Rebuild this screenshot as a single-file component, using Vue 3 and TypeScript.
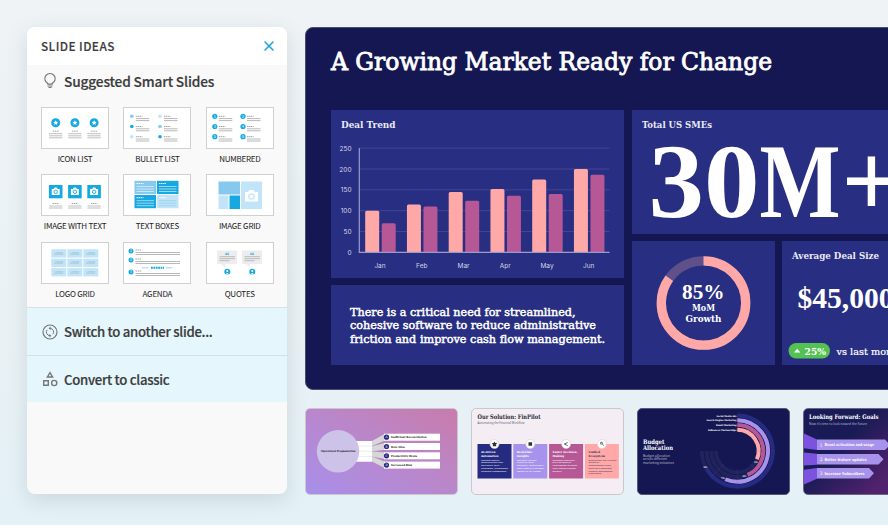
<script setup lang="ts">
interface Bar {
  month: string
  a: number
  b: number
}

const ideas = [
  'ICON LIST', 'BULLET LIST', 'NUMBERED',
  'IMAGE WITH TEXT', 'TEXT BOXES', 'IMAGE GRID',
  'LOGO GRID', 'AGENDA', 'QUOTES',
]

const bars: Bar[] = [
  { month: 'Jan', a: 100, b: 70 },
  { month: 'Feb', a: 115, b: 110 },
  { month: 'Mar', a: 145, b: 124 },
  { month: 'Apr', a: 152, b: 136 },
  { month: 'May', a: 175, b: 140 },
  { month: 'Jun', a: 200, b: 186 },
]
const ticks = [0, 50, 100, 150, 200, 250]

// chart value -> y inside the chart svg
const yOf = (v: number) => 142.3 - v * 0.4165

// bar with rounded top corners
const barPath = (x: number, v: number) => {
  const y = yOf(v)
  return `M${x} 142.3V${y + 1.5}q0-1.5 1.5-1.5h11q1.5 0 1.5 1.5V142.3z`
}

const bulletColors = ['#87c9ee', '#c1e4f8', '#16a9e1', '#87c9ee', '#c1e4f8', '#16a9e1']

const causes = [
  { mark: 'A', text: 'Inefficient Reconciliation', w: 35.5 },
  { mark: 'B', text: 'Data Silos', w: 14 },
  { mark: 'C', text: 'Productivity Drain', w: 26 },
  { mark: 'D', text: 'Increased Risk', w: 21 },
]

const pillars = [
  { fill: '#252b80', ink: '#fff', head: ['AI-Driven', 'Automation'], hw: [14.5, 17.5], body: ['Replaces manual', 'reconciliation and', 'data entry with', 'intelligent, automated', 'financial processing.'] },
  { fill: '#a893ec', ink: '#fff', head: ['Real-Time', 'Insights'], hw: [15.5, 12], body: ['Delivers unified', 'financial data', 'instantly, providing a', 'clear view of business', 'health at all times.'] },
  { fill: '#b65796', ink: '#fff', head: ['Faster Decision-', 'Making'], hw: [25, 11.5], body: ['Empowers operators', 'with actionable', 'intelligence to make', 'data-backed choices', 'quickly.'] },
  { fill: '#ffa8a8', ink: '#3b3156', head: ['Unified', 'Ecosystem'], hw: [11.5, 16.5], body: ['Eliminates the friction', 'caused by', 'disconnected tools,', 'creating a seamless', 'financial management', 'experience.'] },
]

// arc drawn clockwise from 12 o'clock
const arc = (r: number, deg: number) => {
  const t = (deg * Math.PI) / 180
  const x = 100.3 + r * Math.sin(t)
  const y = 43 - r * Math.cos(t)
  return `M100.3 ${43 - r}A${r} ${r} 0 ${deg > 180 ? 1 : 0} 1 ${x} ${y}`
}

const rings = [
  { r: 35.5, deg: 241, color: '#252b80', label: 'Social Media Ads', w: 20, pct: '90%', px: 66.5, py: 59.5 },
  { r: 30.7, deg: 203, color: '#a893ec', label: 'Search Engine Marketing', w: 30, pct: '75%', px: 84, py: 70.5 },
  { r: 26, deg: 157, color: '#b65796', label: 'Email Marketing', w: 20.5, pct: '60%', px: 105.5, py: 69 },
  { r: 21.3, deg: 113, color: '#ffa8a8', label: 'Influencer Partnerships', w: 28.5, pct: '40%', px: 117, py: 54.5 },
]

const goals = [
  { text: 'Boost activation and usage', w: 49.5, end: 82, y: 31.5 },
  { text: 'Better feature updates', w: 42, end: 75.5, y: 46 },
  { text: 'Increase Subscribers', w: 40, end: 66, y: 60 },
]
</script>

<template>
  <div class="page">
    <aside class="panel">
      <header class="panel-head">
        <span>SLIDE IDEAS</span>
        <svg class="close" width="10" height="10" viewBox="0 0 10 10"><path d="M1 1l8 8M9 1l-8 8" stroke="#16a0dd" stroke-width="1.5" stroke-linecap="round" /></svg>
      </header>
      <section class="suggested">
        <h2 class="row-title">
          <svg class="row-icon" width="16" height="18" viewBox="0 0 16 18" fill="none" stroke="#777" stroke-width="1.2">
            <path d="M5.800 12.200V11.400A5.200 5.200 0 1 1 10.200 11.400V12.200zM5.500 14h5" />
            <path d="M6.500 15.500h3" />
          </svg>
          Suggested Smart Slides
        </h2>
        <div class="ideas">
          <div v-for="(name, i) in ideas" :key="name" class="idea">
            <svg class="idea-pic" width="68" height="42" viewBox="0 0 68 42">
              <rect x=".5" y=".5" width="67" height="41" fill="#fff" stroke="#d0d0d0" />
              <g v-if="i === 0">
                <g v-for="n in 3" :key="n" :transform="`translate(${n * 19.2 - 4.5} 0)`">
                  <circle cy="15.7" r="4.5" fill="#16a9e1" />
                  <path d="M0 13.3l.75 1.5 1.7.2-1.2 1.2.3 1.7L0 17.1l-1.5.8.3-1.7-1.2-1.2 1.7-.2z" fill="#fff" />
                  <path d="M-3 24.2H3" stroke="#999" stroke-width=".9" stroke-dasharray="1.5 .7" />
                  <path d="M-6.7 26.7H6.7M-6.7 28.8H6.7M-6.7 30.8H6.7" stroke="#b8b8b8" stroke-width=".9" />
                </g>
              </g>
              <g v-else-if="i === 1 || i === 2">
                <g v-for="n in 6" :key="n" :transform="`translate(${n % 2 ? 8.8 : 37} ${9.3 + Math.floor((n - 1) / 2) * 10.2})`">
                  <circle v-if="i === 1" r="1.8" :fill="bulletColors[n - 1]" />
                  <template v-else>
                    <circle r="2.6" fill="#16a9e1" />
                    <text y="1.2" class="mini-num">{{ n }}</text>
                  </template>
                  <path d="M4 0h6.5" stroke="#999" stroke-width=".9" stroke-dasharray="1.5 .5" />
                  <path d="M4 2.3h13.5M4 4.3h13.5" stroke="#b8b8b8" stroke-width="1" />
                </g>
              </g>
              <g v-else-if="i === 3">
                <g v-for="n in 3" :key="n" :transform="`translate(${n * 19.2 - 4.5} 0)`">
                  <rect x="-6.8" y="11" width="13.6" height="13.3" fill="#16a9e1" />
                  <path d="M-4 15h2l1-1.5h2L2 15h2v6h-8z" fill="#fff" />
                  <circle cy="17.8" r="1.7" fill="#fff" stroke="#16a9e1" stroke-width=".9" />
                  <path d="M-3.2 29.5h6.4" stroke="#999" stroke-width=".9" stroke-dasharray="1.5 .6" />
                  <path d="M-6.7 32h13.4M-6.7 34h13.4" stroke="#b8b8b8" stroke-width=".9" />
                </g>
              </g>
              <g v-else-if="i === 4">
                <g v-for="n in 4" :key="n" :transform="`translate(${n % 2 ? 11.5 : 34} ${n < 3 ? 6.8 : 21})`">
                  <rect width="21.5" height="13.2" :fill="['#87c9ee', '#16a9e1', '#16a9e1', '#c1e4f8'][n - 1]" />
                  <path d="M2 2.7h7" stroke="#fff" stroke-width="1" stroke-dasharray="1.5 .5" />
                  <path d="M2 5.7h17.5M2 8.2h17.5M2 10.7h17.5" :stroke="n === 4 ? '#87c9ee' : '#fff'" stroke-opacity=".7" stroke-width=".8" />
                </g>
              </g>
              <g v-else-if="i === 5">
                <path d="M12.5 7.5H34v13H12.5z" fill="#87c9ee" />
                <path d="M12.5 21.5h10v13.5h-10zM35 7.500h21v27.5H35z" fill="#c1e4f8" />
                <path d="M23.5 21.5H34v13.5H23.5z" fill="#16a9e1" />
                <path d="M39 18h3l1.5-2h4l1.5 2h3v9.5H39z" fill="#fff" />
                <circle cx="45.5" cy="22.5" r="2.7" fill="#fff" stroke="#c1e4f8" stroke-width="1.2" />
              </g>
              <g v-else-if="i === 6">
                <g v-for="n in 9" :key="n" :transform="`translate(${10.3 + ((n - 1) % 3) * 16} ${7.3 + Math.floor((n - 1) / 3) * 9.4})`">
                  <rect width="15" height="8.3" fill="#c1e4f8" />
                  <text x="7.5" y="5.5" class="logo-text">LOGO</text>
                </g>
              </g>
              <g v-else-if="i === 7">
                <g v-for="(y, n) in [9, 18, 30]" :key="y" :transform="`translate(8 ${y})`">
                  <circle r="2.5" fill="#16a9e1" />
                  <text y="1.2" class="mini-num">{{ n + 1 }}</text>
                  <path d="M4.5-1h6" stroke="#999" stroke-width=".9" stroke-dasharray="1.5 .6" />
                  <path d="M4.5 1.5H49M4.5 3.5H49" stroke="#b8b8b8" stroke-width="1" />
                </g>
                <path d="M19 25.8h6.5M43 25.8h6.5" stroke="#87c9ee" stroke-width=".8" />
                <path d="M28 25.8h13" stroke="#16a9e1" stroke-width="2" stroke-dasharray="1.8 .6" />
              </g>
              <g v-else>
                <g v-for="n in 2" :key="n" :transform="`translate(${n * 25 - 14} 0)`">
                  <path d="M0 8.5h20v13.5H8v3l-4-3H0z" fill="#ededed" />
                  <text x="10" y="16" class="quote-text">“</text>
                  <path d="M2.500 14.7h15.5M2.5 16.7h15.5M2.5 18.7h10" stroke="#b5b5b5" stroke-width=".9" />
                  <circle cx="10.3" cy="29.7" r="3" fill="#16a9e1" />
                  <circle cx="10.3" cy="29" r="1" fill="#fff" />
                  <path d="M8.5 32.500q1.800-3 3.600 0z" fill="#fff" />
                </g>
              </g>
            </svg>
            <span class="idea-name">{{ name }}</span>
          </div>
        </div>
      </section>
      <section class="action">
        <svg class="row-icon" width="16" height="16" viewBox="0 0 16 16" fill="none" stroke="#777" stroke-width="1.2">
          <circle cx="8" cy="8" r="7" />
          <path d="M8 4.300A3.700 3.700 0 0 1 10.900 10.200M8 11.700A3.700 3.700 0 0 1 5.100 5.800" stroke-width="1" />
          <path d="M8.600 2.500v3.600L6.600 4.300zM7.400 13.500V9.900l2 1.800z" fill="#777" stroke="none" />
        </svg>
        Switch to another slide...
      </section>
      <section class="action last">
        <svg class="row-icon" width="16" height="16" viewBox="0 0 16 16" fill="none" stroke="#777" stroke-width="1.4">
          <path d="M8 1.700L10.600 6H5.400zM1.700 9.700h4.600v4.600H1.700z" />
          <circle cx="12.200" cy="12" r="2.600" />
        </svg>
        Convert to classic
      </section>
    </aside>

    <main class="stage">
      <div class="slide">
        <h1 class="slide-title">
          <svg width="450" height="40" viewBox="0 0 450 40"><text x="0" y="28" textLength="441" lengthAdjust="spacingAndGlyphs" class="title-text">A Growing Market Ready for Change</text></svg>
        </h1>
        <div class="tiles">
          <div class="left">
            <div class="tile trend">
              <svg width="293" height="167" viewBox="0 0 293 167">
                <text x="10" y="17.500" textLength="54.500" lengthAdjust="spacingAndGlyphs" class="tile-title">Deal Trend</text>
                <g v-for="t in ticks" :key="t">
                  <line x1="28" x2="278.500" :y1="yOf(t)" :y2="yOf(t)" stroke="#424791" stroke-width="1" />
                  <text x="20.500" :y="yOf(t) + 2.500" text-anchor="end" class="axis">{{ t }}</text>
                </g>
                <g v-for="(b, i) in bars" :key="b.month">
                  <path :d="barPath(34.200 + i * 41.750, b.a)" fill="#ffa8a8" />
                  <path :d="barPath(50.700 + i * 41.750, b.b)" fill="#b65796" />
                  <text :x="49 + i * 41.750" y="157.500" text-anchor="middle" class="axis">{{ b.month }}</text>
                </g>
                <path d="M28.300 38v104.300H278.500" fill="none" stroke="#9a9cc6" stroke-width="1.200" />
              </svg>
            </div>
            <div class="tile need">
              <svg width="293" height="80" viewBox="0 0 293 80" class="need-text">
                <text x="19" y="31" textLength="225.500" lengthAdjust="spacingAndGlyphs">There is a critical need for streamlined,</text>
                <text x="19" y="44.300" textLength="246" lengthAdjust="spacingAndGlyphs">cohesive software to reduce administrative</text>
                <text x="19" y="57.600" textLength="255" lengthAdjust="spacingAndGlyphs">friction and improve cash flow management.</text>
              </svg>
            </div>
          </div>
          <div class="right">
            <div class="tile sme">
              <svg width="300" height="124" viewBox="0 0 300 124">
                <text x="10" y="17.500" textLength="70" lengthAdjust="spacingAndGlyphs" class="tile-title">Total US SMEs</text>
                <g class="huge">
                  <text x="16.500" y="107" textLength="111" lengthAdjust="spacingAndGlyphs">30</text>
                  <text x="127.500" y="107" textLength="81" lengthAdjust="spacingAndGlyphs">M</text>
                  <text x="209.500" y="107">+</text>
                </g>
              </svg>
            </div>
            <div class="lower">
              <div class="tile growth">
                <svg width="143" height="124" viewBox="0 0 143 124">
                  <circle cx="71.500" cy="62" r="42.200" fill="none" stroke="#5f5089" stroke-width="9.300" />
                  <circle cx="71.500" cy="62" r="42.200" fill="none" stroke="#ffa8a8" stroke-width="9.300" pathLength="100" stroke-dasharray="85 100" transform="rotate(-90 71.500 62)" />
                  <text x="50" y="58" textLength="42.500" lengthAdjust="spacingAndGlyphs" class="pct">85%</text>
                  <text x="60" y="69.500" textLength="23" lengthAdjust="spacingAndGlyphs" class="mom">MoM</text>
                  <text x="53.500" y="80.500" textLength="36" lengthAdjust="spacingAndGlyphs" class="mom">Growth</text>
                </svg>
              </div>
              <div class="tile average">
                <svg width="160" height="124" viewBox="0 0 160 124">
                  <text x="10" y="18" textLength="87" lengthAdjust="spacingAndGlyphs" class="tile-title">Average Deal Size</text>
                  <text x="15.500" y="67" textLength="96" lengthAdjust="spacingAndGlyphs" class="deal">$45,000</text>
                  <rect x="6.500" y="102" width="41.500" height="15.500" rx="7.700" fill="#54c152" />
                  <path d="M12 111.500l3.200-3.700 3.200 3.700z" fill="#fff" />
                  <text x="22.500" y="113.500" textLength="21.500" lengthAdjust="spacingAndGlyphs" class="chip">25%</text>
                  <text x="54.500" y="113.500" textLength="66" lengthAdjust="spacingAndGlyphs" class="versus">vs last month</text>
                </svg>
              </div>
            </div>
          </div>
        </div>
      </div>

      <div class="strip">
        <div class="thumb cause">
          <svg width="153" height="86" viewBox="0 0 153 86">
            <path d="M50 33h17v20.700H50z" fill="#fff" />
            <path d="M52 38h15M52 43.200h15M52 48.400h15" stroke="#d8d8d8" stroke-width=".5" />
            <g v-for="(c, i) in causes" :key="c.text">
              <path :d="`M67 ${33 + i * 5.200}L80 ${25.800 + i * 9.300}v6.600L67 ${38 + i * 5.200}z`" fill="#d7d7d7" />
              <rect x="79" :y="25.700 + i * 9.300" width="56" height="7" fill="#fff" />
              <circle cx="81.500" :cy="29.200 + i * 9.300" r="2.600" fill="#252b80" />
              <text x="81.500" :y="30.400 + i * 9.300" text-anchor="middle" class="cause-mark">{{ c.mark }}</text>
              <text x="86" :y="30.400 + i * 9.300" :textLength="c.w" lengthAdjust="spacingAndGlyphs" class="cause-text">{{ c.text }}</text>
            </g>
            <circle cx="33" cy="43.300" r="21.200" fill="#cdc2e8" />
            <text x="16" y="44.200" textLength="34.500" lengthAdjust="spacingAndGlyphs" class="cause-text">Operational Fragmentation</text>
          </svg>
        </div>
        <div class="thumb solution">
          <svg width="153" height="86" viewBox="0 0 153 86">
            <text x="6.500" y="10.500" textLength="63" lengthAdjust="spacingAndGlyphs" class="thumb-title dark">Our Solution: FinPilot</text>
            <text x="6.500" y="16.300" textLength="47" lengthAdjust="spacingAndGlyphs" class="thumb-sub">Automating the Financial Workflow</text>
            <g v-for="(p, i) in pillars" :key="i" :transform="`translate(${6.500 + i * 35.800} 36)`" :fill="p.ink">
              <rect width="34" height="34.500" :fill="p.fill" />
              <circle cx="17" r="4.500" fill="#fff" stroke="#d5d0d5" stroke-width=".6" />
              <path v-if="i === 0" d="M17-2.500l.9 1.500 2 .2-1.400 1.300.3 1.800H15.200l.3-1.800-1.400-1.300 2-.2z" fill="#333" />
              <path v-else-if="i === 1" d="M15.200-1.800h3.600v3.600h-3.600z" fill="#333" />
              <path v-else-if="i === 2" d="M15.200 0l3.400-1.500M15.200 0l3.400 1.700" stroke="#444" stroke-width=".8" fill="none" />
              <path v-else d="M15.500-1.500l1.700-.4.400 1.700-1.700.4zM17.500 0l1.300 1.700" stroke="#444" stroke-width=".7" fill="none" />
              <text v-for="(h, n) in p.head" :key="h" x="3.500" :y="9 + n * 3.500" :textLength="p.hw[n]" lengthAdjust="spacingAndGlyphs" class="pillar-head">{{ h }}</text>
              <text v-for="(l, n) in p.body" :key="l" x="3.500" :y="16.700 + n * 2.750" :textLength="l.length * 1.220" lengthAdjust="spacingAndGlyphs" class="pillar-body">{{ l }}</text>
            </g>
          </svg>
        </div>
        <div class="thumb budget">
          <svg width="153" height="86" viewBox="0 0 153 86">
            <g fill="none" stroke="#20235c" stroke-width="3.800">
              <path v-for="r in rings" :key="r.r" :d="arc(r.r, 270)" />
            </g>
            <path v-for="r in rings" :key="r.label" :d="arc(r.r, r.deg)" fill="none" :stroke="r.color" stroke-width="4" />
            <path d="M118 43h20M100.300 61v20M87 56L74 69M113 56l13 13" stroke="#5e60a0" stroke-opacity=".35" stroke-width=".5" />
            <g fill="#fff">
              <text v-for="r in rings" :key="r.pct" :x="99.500 - r.w" :y="44 - r.r" :textLength="r.w" lengthAdjust="spacingAndGlyphs" class="ring-label">{{ r.label }}</text>
              <text v-for="r in rings" :key="r.px" :x="r.px" :y="r.py" textLength="4" lengthAdjust="spacingAndGlyphs" class="ring-label">{{ r.pct }}</text>
              <text x="6" y="35.500" textLength="21.500" lengthAdjust="spacingAndGlyphs" class="thumb-title">Budget</text>
              <text x="6" y="42.300" textLength="30" lengthAdjust="spacingAndGlyphs" class="thumb-title">Allocation</text>
            </g>
            <g class="thumb-sub light">
              <text x="6" y="48.500" textLength="27" lengthAdjust="spacingAndGlyphs">Budget allocation</text>
              <text x="6" y="52" textLength="24" lengthAdjust="spacingAndGlyphs">across different</text>
              <text x="6" y="55.500" textLength="31" lengthAdjust="spacingAndGlyphs">marketing initiatives</text>
            </g>
          </svg>
        </div>
        <div class="thumb goals">
          <svg width="153" height="86" viewBox="0 0 153 86">
            <text x="6" y="10.500" textLength="69.500" lengthAdjust="spacingAndGlyphs" class="thumb-title white">Looking Forward: Goals</text>
            <text x="6" y="16.500" textLength="58" lengthAdjust="spacingAndGlyphs" class="thumb-sub light">Now it’s time to look toward the future</text>
            <path d="M0 25L14 31.500v10.500L0 40zM0 44.500L14 45.700v11L0 57.500zM0 62L14 60v10.700L0 77z" fill="#7c52df" />
            <g v-for="(g, i) in goals" :key="g.text">
              <path :d="`M14 ${g.y}h${g.end - 14}l5 5.300-5 5.300H14z`" fill="#a893ec" />
              <text x="16.800" :y="g.y + 7" class="goal-num">{{ i + 1 }}</text>
              <text x="21.500" :y="g.y + 6.900" :textLength="g.w" lengthAdjust="spacingAndGlyphs" class="goal-text">{{ g.text }}</text>
            </g>
          </svg>
        </div>
      </div>
    </main>
  </div>
</template>

<style>
body {
  margin: 0;
  overflow: hidden;
}
</style>

<style scoped>
.page {
  display: flex;
  gap: 18px;
  box-sizing: border-box;
  width: 888px;
  height: 525px;
  padding: 27px 0 0 27px;
  overflow: hidden;
  background: linear-gradient(180deg, #eff3f6 0%, #e9f1f4 65%, #e4f1f7 100%);
  font-family: "Noto Sans CJK SC", "Noto Sans", sans-serif;
  color: #3c3c3c;
}

svg {
  display: block;
  flex: none;
  overflow: visible;
}

.panel {
  display: flex;
  flex-direction: column;
  flex: none;
  width: 260px;
  height: 467px;
  border-radius: 8px;
  overflow: hidden;
  background: #f9f9f9;
  box-shadow: 0 6px 20px rgba(80, 105, 115, 0.18);
}

.panel-head {
  display: flex;
  align-items: center;
  justify-content: space-between;
  box-sizing: border-box;
  height: 38px;
  padding: 0 13px 0 14px;
  background: #fff;
  font-size: 11.800px;
  font-weight: 500;
  line-height: 16px;
  letter-spacing: 0.450px;
}

.panel-head span {
  padding-bottom: 1px;
  -webkit-text-stroke: 0.150px #3c3c3c;
}

.suggested {
  box-sizing: border-box;
  height: 242px;
  padding: 6px 13px 0 14px;
}

.row-title {
  display: flex;
  align-items: center;
  height: 20px;
  margin: 0 0 16px;
  font-size: 13.700px;
  font-weight: 500;
  letter-spacing: -0.150px;
  -webkit-text-stroke: 0.200px #3c3c3c;
}

.row-icon {
  margin: 0 6px 0 1px;
}

.ideas {
  display: grid;
  grid-template-columns: repeat(3, 68px);
  column-gap: 14.400px;
  grid-auto-rows: 67.300px;
}

.idea {
  display: flex;
  flex-direction: column;
  align-items: center;
}

.idea-name {
  margin-top: 4px;
  font-size: 8px;
  line-height: 12px;
  letter-spacing: -0.250px;
  white-space: nowrap;
  color: #222;
}

.action {
  display: flex;
  align-items: center;
  box-sizing: border-box;
  height: 48px;
  padding-left: 14px;
  border-top: 1px solid #d3e2e6;
  background: #e5f7fc;
  font-size: 13.200px;
  font-weight: 500;
  letter-spacing: -0.300px;
  -webkit-text-stroke: 0.200px #3c3c3c;
}

.action.last {
  height: 47px;
}

.mini-num {
  font-size: 3.500px;
  fill: #fff;
  text-anchor: middle;
}

.logo-text {
  font-size: 3.200px;
  fill: #8ba5b3;
  text-anchor: middle;
}

.quote-text {
  font: bold 9px "Liberation Serif", serif;
  fill: #16a9e1;
  text-anchor: middle;
}

.stage {
  flex: none;
  width: 680px;
}

.slide {
  box-sizing: border-box;
  height: 363px;
  padding: 14px 0 0 24.500px;
  border: 1px solid #4b4c72;
  border-radius: 8px;
  background: #151752;
  color: #fff;
}

.slide-title {
  height: 40px;
  margin: 0 0 28px;
}

.tiles {
  display: flex;
  gap: 7.500px;
}

.left {
  display: flex;
  flex-direction: column;
  gap: 7.500px;
}

.right {
  display: flex;
  flex-direction: column;
  gap: 7px;
}

.lower {
  display: flex;
  gap: 7.500px;
}

.tile {
  background: #282e82;
}

.trend {
  width: 293.500px;
  height: 167.500px;
}

.need {
  width: 293.500px;
  height: 80px;
}

.sme {
  width: 300px;
  height: 124px;
}

.growth {
  width: 143px;
  height: 124px;
}

.average {
  width: 160px;
  height: 124px;
}

.slide text,
.thumb-title,
.cause-text,
.cause-mark,
.pillar-head,
.ring-label,
.goal-text,
.goal-num {
  font-family: "DejaVu Serif Condensed", "DejaVu Serif", serif;
  fill: #fff;
}

.title-text {
  font-size: 25px;
  font-weight: normal;
  stroke: #fff;
  stroke-width: 0.800px;
}

.tile-title {
  font-size: 9.500px;
  font-weight: bold;
  opacity: 0.900;
}

.slide .axis {
  font: 6.500px Inter, sans-serif;
  fill: #d5d6e8;
}

.need-text {
  font-size: 11.700px;
  stroke: #fff;
  stroke-width: 0.450px;
}

.slide .huge text {
  font: bold 105px "Liberation Serif", serif;
}

.slide .pct {
  font: bold 21.500px "Liberation Serif", serif;
}

.mom {
  font-size: 10px;
  font-weight: bold;
}

.slide .deal {
  font: bold 28.500px "Liberation Serif", serif;
}

.chip {
  font-size: 10px;
  font-weight: bold;
}

.versus {
  font-size: 10px;
  stroke: #fff;
  stroke-width: 0.200px;
}

.strip {
  display: flex;
  gap: 12.500px;
  margin: 18px 0 0 -0.500px;
}

.thumb {
  flex: none;
  box-sizing: border-box;
  width: 153.500px;
  height: 87px;
  border: 1px solid #c8c8ce;
  border-radius: 5px;
  overflow: hidden;
}

.thumb svg {
  margin: -1px 0 0 -1px;
}

.cause {
  background: linear-gradient(30deg, #a78fea 0%, #b987cc 50%, #c87cab 100%);
}

.solution {
  background: #f4edf4;
}

.budget {
  border-color: #55577c;
  background: #151752;
}

.goals {
  border-color: #66678a;
  background: linear-gradient(135deg, #181b55 30%, #52226d 65%);
}

.cause-text {
  font-size: 2.700px;
  font-weight: bold;
  fill: #222;
}

.cause-mark {
  font-size: 3px;
}

.thumb-title {
  font-size: 6.300px;
  font-weight: bold;
}

.thumb-title.dark {
  fill: #2b2b35;
}

.thumb-sub {
  font: 3px "Noto Sans", sans-serif;
  fill: #666;
}

.thumb-sub.light {
  fill: #b8b8ce;
}

.pillar-head {
  font-size: 2.900px;
  font-weight: bold;
  fill: inherit;
}

.pillar-body {
  font: 2.400px "Noto Sans", sans-serif;
}

.ring-label {
  font-size: 2.300px;
  font-weight: bold;
}

.goal-num {
  font-size: 4.800px;
}

.goal-text {
  font-size: 4px;
  font-weight: bold;
}
</style>
